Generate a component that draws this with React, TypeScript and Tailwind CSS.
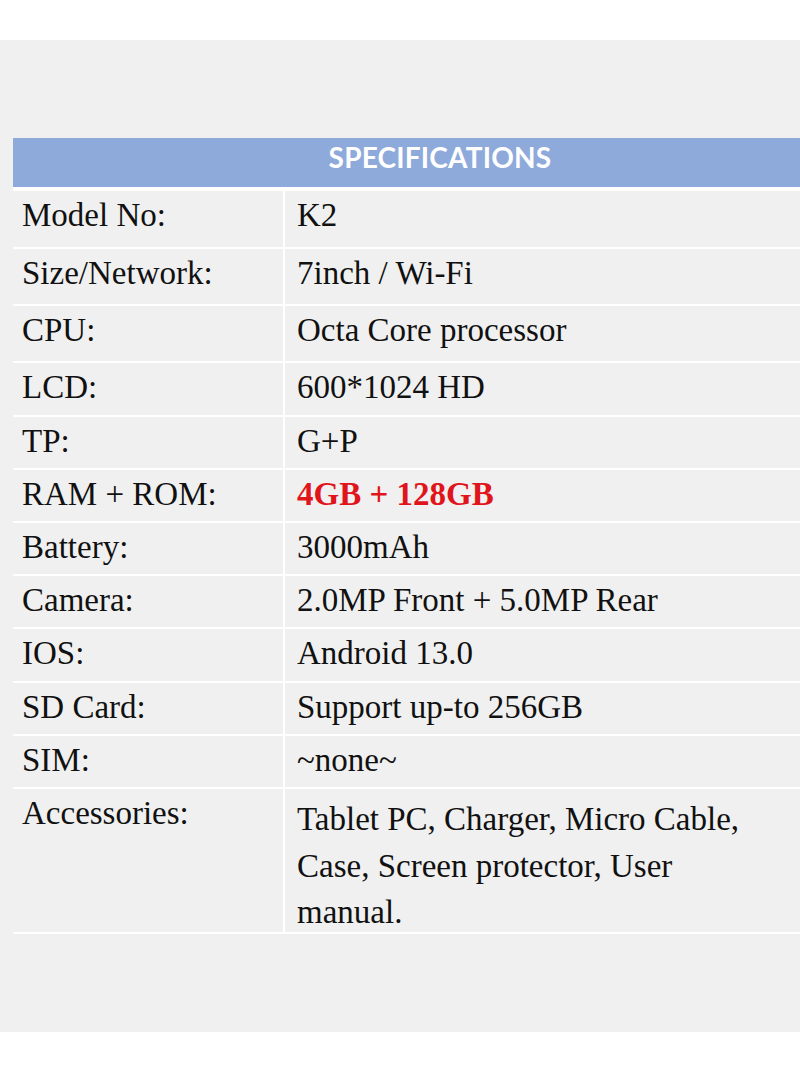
const specs: { label: string; value: string; h: string; red?: boolean }[] = [
  { label: "Model No:", value: "K2", h: "h-[60px]" },
  { label: "Size/Network:", value: "7inch / Wi-Fi", h: "h-[57px]" },
  { label: "CPU:", value: "Octa Core processor", h: "h-[57px]" },
  { label: "LCD:", value: "600*1024 HD", h: "h-[54px]" },
  { label: "TP:", value: "G+P", h: "h-[53px]" },
  { label: "RAM + ROM:", value: "4GB + 128GB", h: "h-[53px]", red: true },
  { label: "Battery:", value: "3000mAh", h: "h-[53px]" },
  { label: "Camera:", value: "2.0MP Front + 5.0MP Rear", h: "h-[53px]" },
  { label: "IOS:", value: "Android 13.0", h: "h-[54px]" },
  { label: "SD Card:", value: "Support up-to 256GB", h: "h-[53px]" },
  { label: "SIM:", value: "~none~", h: "h-[53px]" },
]

export default function App() {
  return (
    <div className="w-[800px] min-h-[1092px] bg-white pt-[40px]">
      <div className="h-[992px] bg-[#f0f0f0] pt-[98px] pl-[13px]">
        {/* header */}
        <div className="h-[49px] bg-[#8eaadb] flex items-center justify-center pl-[67px] pb-[11px]">
          <span className="font-['Lato',sans-serif] font-bold text-[28px] text-white tracking-[0.2px]">
            SPECIFICATIONS
          </span>
        </div>

        <div className="font-['Liberation_Serif',serif] text-[33px] leading-[46px] text-[#111]">
          {specs.map((s, i) => (
            <div
              key={s.label}
              className={`flex border-white ${i === 0 ? "border-t-4" : "border-t-2"} ${s.h}`}
            >
              <div className="w-[272px] shrink-0 border-r-2 border-white pl-[9px] pt-[1px]">
                {s.label}
              </div>
              <div
                className={`flex-1 pl-[12px] pt-[1px] ${
                  s.red ? "font-bold text-[#e0151b]" : ""
                }`}
              >
                {s.value}
              </div>
            </div>
          ))}

          {/* accessories */}
          <div className="flex h-[147px] border-t-2 border-b-2 border-white">
            <div className="w-[272px] shrink-0 border-r-2 border-white pl-[9px] pt-[1px]">
              Accessories:
            </div>
            <div className="flex-1 pl-[12px] pr-[20px] pt-[7px] leading-[46.5px]">
              Tablet PC, Charger, Micro Cable, Case, Screen protector, User manual.
            </div>
          </div>
        </div>
      </div>
    </div>
  )
}
